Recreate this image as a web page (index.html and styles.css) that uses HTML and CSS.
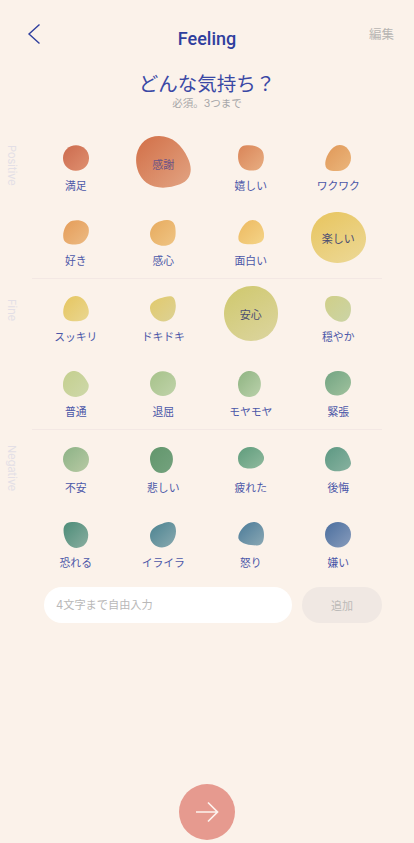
FILE: index.html
```html
<!DOCTYPE html>
<html lang="ja">
<head>
<meta charset="utf-8">
<title>Feeling</title>
<link rel="stylesheet" href="styles.css">
</head>
<body>
<main class="page">
  <header class="topbar">
    <button class="back" aria-label="戻る"><svg viewBox="0 0 14 22" width="14" height="22"><path d="M12.5 1.5 2 11l10.5 9.5" fill="none" stroke="#2f3f9e" stroke-width="1.4"/></svg></button>
    <h1 class="title">Feeling</h1>
    <span class="edit">編集</span>
  </header>
  <h2 class="question">どんな気持ち？</h2>
  <p class="hint">必須。3つまで</p>

  <section class="section">
    <div class="side side-pos">Positive</div>
    <div class="body body-first">
      <div class="row">
        <div class="cell"><div class="slot"><svg class="blob" viewBox="0 0 100 100"><defs><linearGradient id="g1" x1="0" y1="0" x2="1" y2="1"><stop offset="0" stop-color="#cc6b4e"/><stop offset="1" stop-color="#df9070"/></linearGradient></defs><path fill="url(#g1)" d="M50 1C78 1 101 22 100 52C99 80 77 100 48 99C21 98 0 78 0 50C0 22 22 1 50 1Z"/></svg></div><span class="label">満足</span></div>
        <div class="cell"><div class="slot"><div class="big big-a"><svg class="big-shape" viewBox="0 0 100 100" preserveAspectRatio="none"><defs><linearGradient id="g2" x1="0" y1="0" x2="1" y2="1"><stop offset="0" stop-color="#d26f47"/><stop offset="1" stop-color="#e2a483"/></linearGradient></defs><path fill="url(#g2)" d="M42 0C66 0 84 18 94 42C104 64 101 84 80 93C60 101 36 103 19 90C3 77 -2 54 1 36C6 13 21 0 42 0Z"/></svg><span class="big-label big-label-a tint-a">感謝</span></div></div><span class="label label-hidden"></span></div>
        <div class="cell"><div class="slot"><svg class="blob" viewBox="0 0 100 100"><defs><linearGradient id="g3" x1="0" y1="0" x2="1" y2="1"><stop offset="0" stop-color="#da8558"/><stop offset="1" stop-color="#e8ae82"/></linearGradient></defs><path fill="url(#g3)" d="M26 2C48 -2 78 2 92 20C104 38 102 70 84 88C68 102 38 102 18 88C2 76 -3 48 2 28C5 14 12 4 26 2Z"/></svg></div><span class="label">嬉しい</span></div>
        <div class="cell"><div class="slot"><svg class="blob" viewBox="0 0 100 100"><defs><linearGradient id="g4" x1="0" y1="0" x2="1" y2="1"><stop offset="0" stop-color="#e09858"/><stop offset="1" stop-color="#ebb67c"/></linearGradient></defs><path fill="url(#g4)" d="M56 0C82 0 100 24 100 50C100 78 78 100 50 100C26 100 2 100 1 74C0 46 26 0 56 0Z"/></svg></div><span class="label">ワクワク</span></div>
      </div>
      <div class="row">
        <div class="cell"><div class="slot"><svg class="blob" viewBox="0 0 100 100"><defs><linearGradient id="g5" x1="0" y1="0" x2="1" y2="1"><stop offset="0" stop-color="#e59c58"/><stop offset="1" stop-color="#ecbb84"/></linearGradient></defs><path fill="url(#g5)" d="M36 3C60 -4 90 4 98 28C104 52 92 80 68 90C46 98 12 96 3 76C-5 54 8 10 36 3Z"/></svg></div><span class="label">好き</span></div>
        <div class="cell"><div class="slot"><svg class="blob" viewBox="0 0 100 100"><defs><linearGradient id="g6" x1="0" y1="0" x2="1" y2="1"><stop offset="0" stop-color="#e7aa5e"/><stop offset="1" stop-color="#efc584"/></linearGradient></defs><path fill="url(#g6)" d="M64 0C84 -1 98 12 98 36C100 60 98 84 76 94C54 104 18 100 4 72C-6 52 4 26 24 12C36 4 50 1 64 0Z"/></svg></div><span class="label">感心</span></div>
        <div class="cell"><div class="slot"><svg class="blob" viewBox="0 0 100 100"><defs><linearGradient id="g7" x1="0" y1="0" x2="1" y2="1"><stop offset="0" stop-color="#edb960"/><stop offset="1" stop-color="#f4d488"/></linearGradient></defs><path fill="url(#g7)" d="M56 0C78 0 94 22 99 46C104 72 96 88 70 91C46 95 6 96 2 75C-2 50 26 0 56 0Z"/></svg></div><span class="label">面白い</span></div>
        <div class="cell"><div class="slot"><div class="big big-b"><svg class="big-shape" viewBox="0 0 100 100" preserveAspectRatio="none"><defs><linearGradient id="g8" x1="0.2" y1="0" x2="0.8" y2="1"><stop offset="0" stop-color="#e8c662"/><stop offset="1" stop-color="#ecd793"/></linearGradient></defs><path fill="url(#g8)" d="M46 0C74 -1 98 20 100 50C101 78 76 100 48 100C20 100 0 78 0 50C0 22 20 1 46 0Z"/></svg><span class="big-label tint-b">楽しい</span></div></div><span class="label label-hidden"></span></div>
      </div>
    </div>
  </section>

  <section class="section">
    <div class="side side-fine">Fine</div>
    <div class="body body-mid">
      <div class="row">
        <div class="cell"><div class="slot"><svg class="blob" viewBox="0 0 100 100"><defs><linearGradient id="g9" x1="0" y1="0" x2="1" y2="1"><stop offset="0" stop-color="#e6c660"/><stop offset="1" stop-color="#e9d690"/></linearGradient></defs><path fill="url(#g9)" d="M48 0C74 0 92 22 98 50C104 76 88 94 62 96C36 98 4 98 1 66C-1 36 18 0 48 0Z"/></svg></div><span class="label">スッキリ</span></div>
        <div class="cell"><div class="slot"><svg class="blob" viewBox="0 0 100 100"><defs><linearGradient id="g10" x1="0" y1="0" x2="1" y2="1"><stop offset="0" stop-color="#e2ca6c"/><stop offset="1" stop-color="#dcd194"/></linearGradient></defs><path fill="url(#g10)" d="M80 1C96 2 102 28 98 52C94 80 76 98 52 98C28 98 2 76 0 48C-1 30 14 18 36 10C52 4 68 0 80 1Z"/></svg></div><span class="label">ドキドキ</span></div>
        <div class="cell"><div class="slot"><div class="big big-c"><svg class="big-shape" viewBox="0 0 100 100" preserveAspectRatio="none"><defs><linearGradient id="g11" x1="0.2" y1="0" x2="0.8" y2="1"><stop offset="0" stop-color="#d0c970"/><stop offset="1" stop-color="#dbd49c"/></linearGradient></defs><path fill="url(#g11)" d="M52 0C80 0 100 22 100 50C100 78 80 100 50 100C22 100 0 78 0 50C0 22 24 0 52 0Z"/></svg><span class="big-label tint-b">安心</span></div></div><span class="label label-hidden"></span></div>
        <div class="cell"><div class="slot"><svg class="blob" viewBox="0 0 100 100"><defs><linearGradient id="g12" x1="0" y1="0" x2="1" y2="1"><stop offset="0" stop-color="#d0cf88"/><stop offset="1" stop-color="#cbd4a6"/></linearGradient></defs><path fill="url(#g12)" d="M30 0C58 -2 90 8 98 34C104 60 96 92 70 98C48 104 18 84 6 60C-4 38 -4 2 30 0Z"/></svg></div><span class="label">穏やか</span></div>
      </div>
      <div class="row">
        <div class="cell"><div class="slot"><svg class="blob" viewBox="0 0 100 100"><defs><linearGradient id="g13" x1="0" y1="0" x2="1" y2="1"><stop offset="0" stop-color="#c4cf8e"/><stop offset="1" stop-color="#ced8aa"/></linearGradient></defs><path fill="url(#g13)" d="M46 0C66 2 88 26 98 50C104 74 82 98 50 100C22 100 -2 82 0 52C0 24 20 -3 46 0Z"/></svg></div><span class="label">普通</span></div>
        <div class="cell"><div class="slot"><svg class="blob" viewBox="0 0 100 100"><defs><linearGradient id="g14" x1="0" y1="0" x2="1" y2="1"><stop offset="0" stop-color="#a6c28a"/><stop offset="1" stop-color="#c0d3aa"/></linearGradient></defs><path fill="url(#g14)" d="M48 1C76 0 100 20 100 48C100 76 76 96 50 96C22 96 0 74 0 48C0 22 22 2 48 1Z"/></svg></div><span class="label">退屈</span></div>
        <div class="cell"><div class="slot"><svg class="blob" viewBox="0 0 100 100"><defs><linearGradient id="g15" x1="0" y1="0" x2="1" y2="1"><stop offset="0" stop-color="#8fb482"/><stop offset="1" stop-color="#bad1ab"/></linearGradient></defs><path fill="url(#g15)" d="M40 0C66 -2 88 18 88 50C88 78 70 100 44 100C18 100 2 84 0 54C-1 30 14 2 40 0Z"/></svg></div><span class="label">モヤモヤ</span></div>
        <div class="cell"><div class="slot"><svg class="blob" viewBox="0 0 100 100"><defs><linearGradient id="g16" x1="0" y1="0" x2="1" y2="1"><stop offset="0" stop-color="#72a482"/><stop offset="1" stop-color="#a0c29e"/></linearGradient></defs><path fill="url(#g16)" d="M48 0C76 -1 100 14 100 44C100 68 76 92 50 94C22 96 0 78 0 46C0 18 22 1 48 0Z"/></svg></div><span class="label">緊張</span></div>
      </div>
    </div>
  </section>

  <section class="section">
    <div class="side side-neg">Negative</div>
    <div class="body body-last">
      <div class="row">
        <div class="cell"><div class="slot"><svg class="blob" viewBox="0 0 100 100"><defs><linearGradient id="g17" x1="0" y1="0" x2="1" y2="1"><stop offset="0" stop-color="#8cb286"/><stop offset="1" stop-color="#b8caa4"/></linearGradient></defs><path fill="url(#g17)" d="M48 0C76 0 100 20 100 48C100 76 76 96 50 96C22 96 0 74 0 46C0 20 22 0 48 0Z"/></svg></div><span class="label">不安</span></div>
        <div class="cell"><div class="slot"><svg class="blob" viewBox="0 0 100 100"><defs><linearGradient id="g18" x1="0" y1="0" x2="1" y2="1"><stop offset="0" stop-color="#62966c"/><stop offset="1" stop-color="#74a27e"/></linearGradient></defs><path fill="url(#g18)" d="M40 0C66 -2 88 16 88 44C90 72 70 100 44 100C18 100 2 76 0 48C-1 24 14 2 40 0Z"/></svg></div><span class="label">悲しい</span></div>
        <div class="cell"><div class="slot"><svg class="blob" viewBox="0 0 100 100"><defs><linearGradient id="g19" x1="0" y1="0" x2="1" y2="1"><stop offset="0" stop-color="#5f9c7c"/><stop offset="1" stop-color="#90ba9e"/></linearGradient></defs><path fill="url(#g19)" d="M46 0C70 -1 94 14 100 38C103 56 86 76 58 82C30 86 0 78 0 44C0 20 20 1 46 0Z"/></svg></div><span class="label">疲れた</span></div>
        <div class="cell"><div class="slot"><svg class="blob" viewBox="0 0 100 100"><defs><linearGradient id="g20" x1="0" y1="0" x2="1" y2="1"><stop offset="0" stop-color="#5c9882"/><stop offset="1" stop-color="#88b2a0"/></linearGradient></defs><path fill="url(#g20)" d="M46 0C74 0 92 26 99 56C104 78 84 90 56 93C28 96 0 86 0 50C0 22 20 0 46 0Z"/></svg></div><span class="label">後悔</span></div>
      </div>
      <div class="row">
        <div class="cell"><div class="slot"><svg class="blob" viewBox="0 0 100 100"><defs><linearGradient id="g21" x1="0" y1="0" x2="1" y2="1"><stop offset="0" stop-color="#4c8c78"/><stop offset="1" stop-color="#8aaea0"/></linearGradient></defs><path fill="url(#g21)" d="M34 0C64 -2 96 14 97 48C98 76 82 100 52 100C30 100 10 80 4 50C-1 24 2 2 34 0Z"/></svg></div><span class="label">恐れる</span></div>
        <div class="cell"><div class="slot"><svg class="blob" viewBox="0 0 100 100"><defs><linearGradient id="g22" x1="0" y1="0" x2="1" y2="1"><stop offset="0" stop-color="#4a8290"/><stop offset="1" stop-color="#8aaab0"/></linearGradient></defs><path fill="url(#g22)" d="M72 0C92 0 100 14 100 36C100 68 78 98 46 98C20 98 0 78 0 54C0 32 18 18 38 10C50 5 62 0 72 0Z"/></svg></div><span class="label">イライラ</span></div>
        <div class="cell"><div class="slot"><svg class="blob" viewBox="0 0 100 100"><defs><linearGradient id="g23" x1="0" y1="0" x2="1" y2="1"><stop offset="0" stop-color="#4a7a98"/><stop offset="1" stop-color="#8aa8b4"/></linearGradient></defs><path fill="url(#g23)" d="M60 0C84 0 100 20 100 48C100 76 92 92 70 90C46 88 12 86 2 64C-4 44 28 0 60 0Z"/></svg></div><span class="label">怒り</span></div>
        <div class="cell"><div class="slot"><svg class="blob" viewBox="0 0 100 100"><defs><linearGradient id="g24" x1="0" y1="0" x2="1" y2="1"><stop offset="0" stop-color="#4a6e9e"/><stop offset="1" stop-color="#889cbc"/></linearGradient></defs><path fill="url(#g24)" d="M50 0C78 0 100 20 100 48C100 76 78 98 50 98C22 98 0 76 0 48C0 20 22 0 50 0Z"/></svg></div><span class="label">嫌い</span></div>
      </div>
    </div>
  </section>

  <form class="entry">
    <input class="entry-input" type="text" placeholder="4文字まで自由入力">
    <button class="entry-add" type="button">追加</button>
  </form>

  <div class="footer">
    <button class="next" aria-label="次へ"><svg viewBox="0 0 24 22" width="24" height="22"><path d="M1 11h21M13 1.5 22.5 11 13 20.5" fill="none" stroke="#fdf3ee" stroke-width="1.7"/></svg></button>
  </div>
</main>
</body>
</html>
```
FILE: styles.css
```css
* { box-sizing: border-box; }
html, body { margin: 0; padding: 0; }
body {
  background: #fbf2ea;
  font-family: "Inter", "Noto Sans CJK JP", sans-serif;
  color: #2f3f9e;
}
.page {
  width: 414px;
  height: 843px;
  overflow: hidden;
  display: flex;
  flex-direction: column;
}
.topbar {
  height: 71px;
  padding: 24px 20px 0 20px;
  display: grid;
  grid-template-columns: 60px 1fr 60px;
  align-items: start;
}
.back {
  background: none;
  border: 0;
  padding: 0;
  margin: -1px 0 0 7px;
  width: 14px;
  height: 22px;
  line-height: 0;
}
.title {
  margin: 2px 0 0;
  font-family: "Roboto", sans-serif;
  font-size: 18px;
  line-height: 26px;
  font-weight: 500;
  text-align: center;
  color: #2f3f9e;
}
.edit {
  justify-self: end;
  font-size: 12.5px;
  line-height: 22px;
  color: #b7b5b3;
}
.question {
  margin: 0;
  font-size: 19.5px;
  line-height: 26px;
  font-weight: 400;
  text-align: center;
  color: #3a48a5;
}
.hint {
  margin: 0 0 35px;
  font-size: 10.5px;
  line-height: 13px;
  text-align: center;
  color: #a6a6a8;
}
.section { display: flex; }
.side {
  width: 32px;
  padding-right: 14px;
  writing-mode: vertical-rl;
  font-size: 11px;
  line-height: 12px;
  color: #e3dfe6;
}
.side-pos { padding-top: 0; }
.side-fine { padding-top: 20px; }
.side-neg { padding-top: 15px; }
.body {
  width: 350px;
  display: flex;
  flex-direction: column;
  gap: 26px;
}
.body-first { padding-bottom: 9px; border-bottom: 1px solid #f3e8e4; }
.body-mid { padding: 17px 0 9px; border-bottom: 1px solid #f3e8e4; }
.body-last { padding-top: 17px; }
.row {
  display: grid;
  grid-template-columns: repeat(4, 1fr);
}
.cell {
  display: flex;
  flex-direction: column;
  align-items: center;
  gap: 8px;
}
.slot {
  height: 26px;
  width: 100%;
  display: flex;
  align-items: center;
  justify-content: center;
}
.blob { width: 26px; height: 26px; flex: none; display: block; }
.big {
  flex: none;
  display: grid;
  place-items: center;
  margin-top: 8px;
}
.big > * { grid-area: 1 / 1; }
.big-a { width: 55px; height: 52px; }
.big-b { width: 55px; height: 51px; }
.big-c { width: 54px; height: 55px; }
.big-shape { width: 100%; height: 100%; display: block; }
.big-label { font-size: 11px; line-height: 14px; padding-top: 3px; }
.big-label-a { padding-top: 5px; }
.tint-a { color: #6a5285; }
.tint-b { color: #4a4c72; }
.label {
  font-size: 10.8px;
  line-height: 15px;
  height: 15px;
  color: #4b57a8;
  white-space: nowrap;
}
.label-hidden { visibility: hidden; }
.entry {
  display: flex;
  gap: 10px;
  padding: 16px 32px 0 44px;
}
.entry-input {
  width: 248px;
  height: 36px;
  border: 0;
  border-radius: 18px;
  background: #fff;
  padding: 0 12px;
  font: 11.2px "Inter", "Noto Sans CJK JP", sans-serif;
  outline: none;
}
.entry-input::placeholder { color: #b9b8b8; opacity: 1; }
.entry-add {
  width: 80px;
  height: 36px;
  border: 0;
  border-radius: 18px;
  background: #f0e8e3;
  font: 11px "Inter", "Noto Sans CJK JP", sans-serif;
  color: #bcbab8;
}
.footer {
  margin-top: auto;
  padding-bottom: 3px;
  display: flex;
  justify-content: center;
}
.next {
  width: 56px;
  height: 56px;
  border: 0;
  border-radius: 50%;
  background: #e69a8f;
  display: flex;
  align-items: center;
  justify-content: center;
  padding: 0;
}
```
